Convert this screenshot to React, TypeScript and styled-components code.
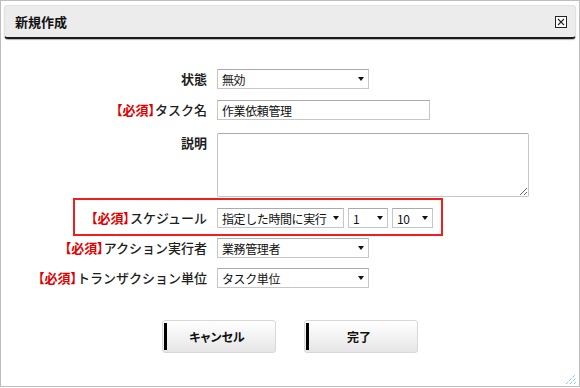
import React from "react";
import styled, { createGlobalStyle } from "styled-components";

const GlobalStyle = createGlobalStyle`
  html, body {
    margin: 0;
    padding: 0;
    background: #fff;
  }
  body {
    font-family: "Noto Sans CJK JP", "DejaVu Sans", sans-serif;
    color: #222;
  }
`;

const Dialog = styled.div`
  position: relative;
  width: 580px;
  height: 387px;
  box-sizing: border-box;
  border: 1px solid #bdbdbd;
  background: #fff;
  display: flex;
  flex-direction: column;
`;

const Header = styled.div`
  margin: 4px 3px 0;
  height: 34px;
  box-sizing: border-box;
  display: flex;
  align-items: center;
  justify-content: space-between;
  padding: 0 8px 0 10px;
  background: #ececec;
  border: 1px solid #e0e0e0;
  border-bottom: 2px solid #1b1b1b;
  border-radius: 4px;
  box-shadow: 0 1px 1px rgba(0, 0, 0, 0.3);
`;

const Title = styled.h2`
  margin: 0;
  font-size: 13px;
  font-weight: 700;
  color: #111;
`;

const Body = styled.div`
  margin-top: 30px;
  display: flex;
  flex-direction: column;
`;

const Row = styled.div<{ $mt: number }>`
  display: flex;
  align-items: flex-start;
  gap: 10px;
  margin-top: ${(p) => p.$mt}px;
`;

const Highlight = styled(Row)`
  width: 370px;
  margin-left: 72px;
  box-sizing: border-box;
  border: 2px solid #f21d1d;
  padding: 8px 0 6px;
`;

const Label = styled.label<{ $w: number; $bold?: boolean }>`
  width: ${(p) => p.$w}px;
  flex-shrink: 0;
  text-align: right;
  font-size: 13px;
  line-height: 20px;
  white-space: nowrap;
  font-weight: ${(p) => (p.$bold ? 700 : 500)};
  color: #1e1e1e;
`;

const Required = styled.span`
  color: #e00000;
  font-weight: 700;
  font-feature-settings: "palt";
`;

const Controls = styled.div`
  display: flex;
  gap: 4px;
`;

const Select = styled.div<{ $w: number }>`
  width: ${(p) => p.$w}px;
  height: 20px;
  box-sizing: border-box;
  display: flex;
  align-items: center;
  justify-content: space-between;
  padding: 0 4px 0 4px;
  border: 1px solid #c6c6c6;
  border-top-color: #aaaaaa;
  background: #fff;
  font-size: 12px;
  letter-spacing: -0.4px;
  color: #111;
`;

const Arrow = styled.span`
  flex-shrink: 0;
  width: 0;
  height: 0;
  border-left: 3.5px solid transparent;
  border-right: 3.5px solid transparent;
  border-top: 4px solid #111;
`;

const TextInput = styled.input`
  width: 213px;
  height: 20px;
  box-sizing: border-box;
  margin: 0;
  padding: 0 4px;
  border: 1px solid #c6c6c6;
  border-top-color: #aaaaaa;
  font-family: inherit;
  font-size: 12px;
  letter-spacing: -0.4px;
  color: #111;
  outline: none;
`;

const TextArea = styled.textarea`
  width: 312px;
  height: 64px;
  box-sizing: border-box;
  margin: 0;
  border: 1px solid #c6c6c6;
  border-top-color: #aaaaaa;
  border-radius: 2px;
  font-family: inherit;
  font-size: 12px;
  outline: none;
  resize: both;
`;

const Buttons = styled.div`
  display: flex;
  justify-content: center;
  gap: 28px;
  margin-top: 32px;
`;

const Button = styled.button`
  width: 114px;
  height: 33px;
  box-sizing: border-box;
  display: flex;
  align-items: center;
  padding: 0;
  border: 1px solid #d8d8d8;
  border-radius: 3px;
  background: linear-gradient(#ffffff, #e6e6e6);
  font-family: inherit;
  font-size: 12px;
  font-weight: 700;
  color: #111;
  cursor: pointer;
`;

const Bar = styled.span`
  width: 3px;
  height: 27px;
  margin-left: 1px;
  background: #000;
`;

const ButtonText = styled.span`
  flex: 1;
  text-align: center;
  padding-right: 8px;
  font-feature-settings: "palt";
`;

const Grip = styled.svg`
  position: absolute;
  right: 2px;
  bottom: 1px;
`;

const CloseIcon = () => (
  <svg width="12" height="12" viewBox="0 0 12 12">
    <rect x="0.5" y="0.5" width="11" height="11" fill="#fff" stroke="#222" />
    <path d="M3 3 L9 9 M9 3 L3 9" stroke="#222" strokeWidth="1.1" />
  </svg>
);

const Req = () => <Required>【必須】</Required>;

export default function App() {
  return (
    <>
      <GlobalStyle />
      <Dialog>
        <Header>
          <Title>新規作成</Title>
          <CloseIcon />
        </Header>
        <Body>
          <Row $mt={0}>
            <Label $w={206} $bold>
              状態
            </Label>
            <Select $w={152}>
              無効
              <Arrow />
            </Select>
          </Row>
          <Row $mt={11}>
            <Label $w={206}>
              <Req />
              タスク名
            </Label>
            <TextInput defaultValue="作業依頼管理" />
          </Row>
          <Row $mt={13}>
            <Label $w={206} $bold>
              説明
            </Label>
            <TextArea />
          </Row>
          <Highlight $mt={1}>
            <Label $w={132}>
              <Req />
              スケジュール
            </Label>
            <Controls>
              <Select $w={127}>
                指定した時間に実行
                <Arrow />
              </Select>
              <Select $w={40}>
                1
                <Arrow />
              </Select>
              <Select $w={41}>
                10
                <Arrow />
              </Select>
            </Controls>
          </Highlight>
          <Row $mt={2}>
            <Label $w={206}>
              <Req />
              アクション実行者
            </Label>
            <Select $w={152}>
              業務管理者
              <Arrow />
            </Select>
          </Row>
          <Row $mt={10}>
            <Label $w={206}>
              <Req />
              トランザクション単位
            </Label>
            <Select $w={152}>
              タスク単位
              <Arrow />
            </Select>
          </Row>
          <Buttons>
            <Button>
              <Bar />
              <ButtonText>キャンセル</ButtonText>
            </Button>
            <Button>
              <Bar />
              <ButtonText>完了</ButtonText>
            </Button>
          </Buttons>
        </Body>
        <Grip width="12" height="11" viewBox="0 0 12 11">
          <path
            d="M1 10 L10 1 M5 10 L11 4 M9 10 L11 8"
            stroke="#4aa8e6"
            strokeWidth="1"
            strokeDasharray="1 1"
          />
        </Grip>
      </Dialog>
    </>
  );
}
